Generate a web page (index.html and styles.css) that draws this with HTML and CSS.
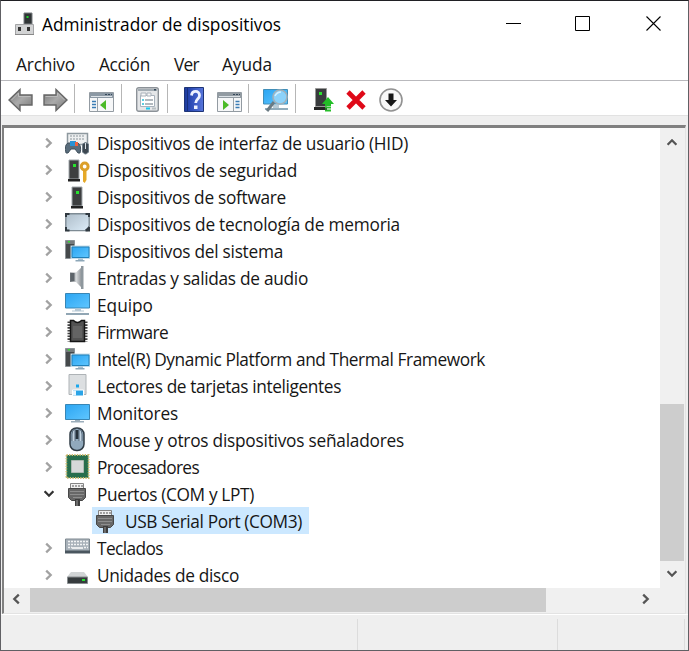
FILE: index.html
```html
<!DOCTYPE html>
<html lang="es">
<head>
<meta charset="utf-8">
<title>Administrador de dispositivos</title>
<link rel="stylesheet" href="styles.css">
</head>
<body>
<svg width="0" height="0" class="defs">
  <defs>
    <linearGradient id="blue" x2="1" y2="1"><stop stop-color="#2ba5f2"/><stop offset="1" stop-color="#5fc6ff"/></linearGradient>
    <linearGradient id="metal" x2="1"><stop stop-color="#6e7378"/><stop offset=".5" stop-color="#d4d7d9"/><stop offset="1" stop-color="#777d83"/></linearGradient>
    <linearGradient id="arrow" x2="1" y2="1"><stop stop-color="#777"/><stop offset=".5" stop-color="#aaa"/><stop offset="1" stop-color="#787878"/></linearGradient>
    <linearGradient id="silver" y2="1" x2="1"><stop stop-color="#aebdc9"/><stop offset="1" stop-color="#dcecf8"/></linearGradient>
    <linearGradient id="help" x2="1"><stop stop-color="#1e3c9c"/><stop offset=".2" stop-color="#2342ad"/><stop offset="1" stop-color="#5876dc"/></linearGradient>
  </defs>
  <symbol id="chev" viewBox="0 0 10 12"><path d="M2.2 1.6 6.7 6 2.2 10.4" fill="none" stroke="currentColor" stroke-width="2.3"/></symbol>
  <symbol id="tower" viewBox="0 0 25 27"><path d="M7 3h10v19H7z" fill="#3d3f40" stroke="#a2a8ac"/><path d="M6 22h12v2.5H6z" fill="#222"/><path d="M11 7h3v3h-3z" fill="#27e32e"/></symbol>
  <symbol id="system" viewBox="0 0 25 27"><path d="M.5 2.500h9v18h-9z" fill="#45494b" stroke="#8d9397"/><path d="M1 3h8v3H1z" fill="#767b7e"/><path d="M3 3h2v1.500H3z" fill="#35db33"/><path d="M6.500 8.500h18v11.500h-18z" fill="url(#blue)" stroke="#c4dcea" stroke-width="2"/><path d="M7 9h17v10.500H7z" fill="url(#blue)" stroke="#2280b8"/><path d="M13 20.500h5v2h-5z" fill="#a9c2d2"/><path d="M10.500 22h9v1.500h-9z" fill="#8da7b8"/></symbol>
  <symbol id="port" viewBox="0 0 25 27"><path d="M5.500 2.500h13v6h-13z" fill="#f0f0f0" stroke="#858585"/><path d="M8 4v2m3-2v2m3-2v2m3-2v2" stroke="#555"/><path d="M3.500 7.500h17v9l-3 3h-11l-3-3z" fill="#686868" stroke="#474747"/><path d="M5 10.500h14M5 13.500h14M8 16.500h9" stroke="#8e8e8e"/><path d="M10 18h5v7h-5z" fill="#3e3e3e"/><path d="M12 19v6" stroke="#999"/></symbol>
</svg>
<div class="window">
  <header class="titlebar">
    <svg class="app" viewBox="0 0 22 26"><path d="M10 2h8v11h-8z" fill="#303536" stroke="#787d80"/><path d="M12.500 5h2v2h-2z" fill="#20d22e"/><path d="M1.500 13.500h18v10h-18z" fill="#d2d3d4" stroke="#a4a5a7"/><path d="M4 16h3v4H4zm9 0h3v4h-3z" fill="#333"/><path d="M1 23.500h19" stroke="#888"/></svg>
    <h1><span class="t" style="width:239px">Administrador de dispositivos</span></h1>
    <div class="controls">
      <svg viewBox="0 0 16 16"><path d="M0 7.500h15" stroke="#000"/></svg>
      <svg viewBox="0 0 16 16"><path d="M.5.500h14v14H.5z" fill="none" stroke="#000"/></svg>
      <svg class="close" viewBox="0 0 16 16"><path d="M.5.500l14 14m0-14-14 14" stroke="#000" stroke-width="1.100"/></svg>
    </div>
  </header>
  <nav class="menu"><span class="t" style="width:59px">Archivo</span><span class="t" style="width:51px">Acción</span><span class="t" style="width:25px">Ver</span><span class="t" style="width:50px">Ayuda</span></nav>
  <div class="toolbar">
    <svg class="back" viewBox="0 0 25 24"><path d="M1 12 12 1.500V7h12v10H12v5.500z" fill="url(#arrow)" stroke="#666" stroke-width="1.400"/><path d="M3.500 12 10.500 5v3.500h12" fill="none" stroke="#bbb"/></svg>
    <svg class="forward" viewBox="0 0 25 24"><path d="M24 12 13 1.500V7H1v10h12v5.500z" fill="url(#arrow)" stroke="#666" stroke-width="1.400"/><path d="M21.500 12 14.500 5v3.500h-12" fill="none" stroke="#bbb"/></svg>
    <i></i>
    <svg class="console" viewBox="0 0 25 20"><path d="M.5.500h24v19H.5z" fill="#f6f7f8" stroke="#939ba2"/><path d="M1 1h23v5H1z" fill="#8b98a4"/><path d="M2 4.500h21" stroke="#dce2e7"/><path d="M16 2.500h2m1 0h2m1 0h1" stroke="#35485a"/><path d="M8.500 6v13" stroke="#9aa2a8"/><path d="M3 9.500h4M3 12.500h4M3 15.500h4" stroke="#397bb4" stroke-width="1.500"/><path d="m17 8-6 5 6 5z" fill="#4aba26"/></svg>
    <i></i>
    <svg class="properties" viewBox="0 0 23 25"><rect x=".7" y=".7" width="21.600" height="23.600" rx="2" fill="#e5e7e9" stroke="#8c9298" stroke-width="1.400"/><path d="M2 3h19" stroke="#a3acb3" stroke-width="2"/><path d="M18 2h2v1.500h-2z" fill="#34485a"/><path d="M4.500 8.500h14v11h-14z" fill="#fff" stroke="#a8b2bc"/><path d="M5 6h5v3H5zm6 0h4v3h-4z" fill="#f8f8f8" stroke="#aab2bb"/><path d="M6 13h2m-2 4h2" stroke="#28bfd6" stroke-width="1.500"/><path d="M9 13h8m-8 4h8" stroke="#99a3aa" stroke-width="1.300"/><path d="M10 20.500h4v2h-4z" fill="#15c8ef"/><path d="M16 20.500h4v2h-4z" fill="#b8bfc3"/></svg>
    <i></i>
    <svg class="help" viewBox="0 0 20 25"><path d="M.5.500h19v24H.5z" fill="url(#help)" stroke="#1e3577"/><path d="M3.500 1v23" stroke="#17307c"/><path d="M7.500 8.500C8 3 15.500 3 15.500 8.500c0 3.500-3.800 3.500-3.800 7.500" fill="none" stroke="#eef2ff" stroke-width="2.800"/><path d="M10 18.500h3.500V22H10z" fill="#eef2ff"/></svg>
    <svg class="console actions" viewBox="0 0 25 20"><path d="M.5.500h24v19H.5z" fill="#f6f7f8" stroke="#939ba2"/><path d="M1 1h23v5H1z" fill="#929ba2"/><path d="M2 4.500h21" stroke="#dce2e7"/><path d="M16 2.500h2m1 0h2m1 0h1" stroke="#35485a"/><path d="M16.500 6v13" stroke="#9aa2a8"/><path d="M18.500 9.500h4M18.500 12.500h4M18.500 15.500h4" stroke="#397bb4" stroke-width="1.500"/><path d="m6 8 6 5-6 5z" fill="#4aba26"/></svg>
    <i></i>
    <svg class="scan" viewBox="0 0 26 24"><path d="M.5 1.500h24V16H.5z" fill="url(#blue)" stroke="#418eb8"/><path d="M10 17h6v3h-6z" fill="#b8cbd6"/><path d="M2 21h23" stroke="#91acbb" stroke-width="2"/><path d="m11 14-7 9" stroke="#6b7b83" stroke-width="3"/><circle cx="17" cy="9" r="7" fill="#8cd2fa" stroke="#a1b1ba" stroke-width="1.600"/><path d="M12 8q2-4 6-4" fill="none" stroke="#d6f0ff" stroke-width="1.500"/></svg>
    <i></i>
    <svg class="update" viewBox="0 0 20 25"><path d="M1.500 1.500h11v18h-11z" fill="#383b3d" stroke="#999"/><path d="M0 20h13v3H0z" fill="#252525"/><path d="M5 5h3v3H5z" fill="#2ae12d"/><path d="m14 10 6 7h-3v2h-6v-2H8z" fill="#22bd27"/><path d="M11 20.500h6m-6 3h6" stroke="#27be2a" stroke-width="1.800"/></svg>
    <svg class="remove" viewBox="0 0 20 20"><path d="m2 2 16 16M18 2 2 18" stroke="#df0918" stroke-width="4.700"/></svg>
    <svg class="disable" viewBox="0 0 24 24"><circle cx="12" cy="12" r="11" fill="#f8f8f8" stroke="#929292" stroke-width="1.600"/><path d="M9.500 5.500h5V12H18l-6 6.500L6 12h3.500z" fill="#161616"/></svg>
  </div>
  <div class="gutter"></div>
  <main class="panel">
    <ul class="tree">
      <li><svg class="c"><use href="#chev"/></svg><svg class="icon" viewBox="0 0 25 27"><path d="M2.500 3.500h20v11h-20z" fill="#eef0f1" stroke="#8e999f" stroke-width="1.500"/><path d="M5 6h15M5 9h15" stroke="#8d969c" stroke-dasharray="2 1"/><path d="M1 23Q-1 15 3 13h10q4 3 2 10h-2l-3-4H6l-3 4z" fill="#596c7b" stroke="#40505c"/><path d="M5 11h6v5H5z" fill="#2a92d5"/><path d="M10 12h3v4h-3z" fill="#eb6241"/><path d="M17.500 14q3-3 6 0v8q-3 4-6 0z" fill="#3d4851" stroke="#6d7c87"/><path d="M20.500 13v6" stroke="#dce3e8"/></svg><span class="t" style="width:311px">Dispositivos de interfaz de usuario (HID)</span></li>
      <li><svg class="c"><use href="#chev"/></svg><svg class="icon" viewBox="0 0 25 27"><use href="#tower" x="-3" width="25" height="27"/><path d="M18 13h3.500v10L19.700 26 18 24.500z" fill="#e6a928"/><circle cx="19.700" cy="9.500" r="3.400" fill="none" stroke="#dca02a" stroke-width="3"/></svg><span class="t" style="width:200px">Dispositivos de seguridad</span></li>
      <li><svg class="c"><use href="#chev"/></svg><svg class="icon"><use href="#tower"/></svg><span class="t" style="width:189px">Dispositivos de software</span></li>
      <li><svg class="c"><use href="#chev"/></svg><svg class="icon" viewBox="0 0 25 27"><rect x=".8" y="2.800" width="23.400" height="16.800" rx="2" fill="url(#silver)" stroke="#7e8b94" stroke-width="1.400"/><path d="M1 6V3h3.500M20.500 3H24v3M1 16v3.500h3.500m16 0H24V16" fill="none" stroke="#303940" stroke-width="2"/><path d="m20 19 4-4v4z" fill="#303940"/></svg><span class="t" style="width:303px">Dispositivos de tecnología de memoria</span></li>
      <li><svg class="c"><use href="#chev"/></svg><svg class="icon"><use href="#system"/></svg><span class="t" style="width:186px">Dispositivos del sistema</span></li>
      <li><svg class="c"><use href="#chev"/></svg><svg class="icon" viewBox="0 0 25 27"><path d="M5 7.500h6L18 1v23l-7-7H5z" fill="url(#metal)"/><path d="M5.500 8h4v8h-4z" fill="#5d646a"/><path d="M16 1h2.500v23H16z" fill="#8e979d"/></svg><span class="t" style="width:211px">Entradas y salidas de audio</span></li>
      <li><svg class="c"><use href="#chev"/></svg><svg class="icon" viewBox="0 0 25 27"><path d="M.5 1.500h24v14.500H.5z" fill="url(#blue)" stroke="#3886b5"/><path d="M10 16.500h6v2h-6zM7 18.500h12v1H7z" fill="#b5c7d3"/><path d="M1 22h23" stroke="#91a6b4" stroke-width="2"/></svg><span class="t" style="width:56px">Equipo</span></li>
      <li><svg class="c"><use href="#chev"/></svg><svg class="icon" viewBox="0 0 25 27"><path d="M4 2.500v20m17-20v20" stroke="#444" stroke-width="3" stroke-dasharray="1.600 1.200"/><path d="M5.500 1.500h3q4 4 8 0h3v21h-14z" fill="#535353" stroke="#151515" stroke-width="1.500"/><path d="M8 7h9v12H8z" fill="#646464"/></svg><span class="t" style="width:71px">Firmware</span></li>
      <li><svg class="c"><use href="#chev"/></svg><svg class="icon"><use href="#system"/></svg><span class="t" style="width:388px">Intel(R) Dynamic Platform and Thermal Framework</span></li>
      <li><svg class="c"><use href="#chev"/></svg><svg class="icon" viewBox="0 0 25 27"><path d="M4 1.500h17v20H4z" fill="#dcdfe1" stroke="#aeb3b6"/><path d="M11 11.500h3v3h-3z" fill="#1ba7ec"/><path d="M7.500 17h11v6h-11z" fill="#2aa4e7" stroke="#fff"/><path d="M8 17.500h3v5H8z" fill="#e9f6ff"/></svg><span class="t" style="width:244px">Lectores de tarjetas inteligentes</span></li>
      <li><svg class="c"><use href="#chev"/></svg><svg class="icon" viewBox="0 0 25 27"><path d="M.5 4.500h24v15H.5z" fill="url(#blue)" stroke="#3886b5"/><path d="M10 20h5v1.500h-5zM6 21h13v1.500H6z" fill="#9caebb"/></svg><span class="t" style="width:81px">Monitores</span></li>
      <li><svg class="c"><use href="#chev"/></svg><svg class="icon" viewBox="0 0 25 27"><rect x="5" y="1" width="14" height="22.500" rx="6.500" fill="#91a9bc" stroke="#303c46" stroke-width="1.500"/><path d="M7 14V7q0-4 3-5v12m4 0V2q3 1 3 5v7" fill="#c3d4e1" stroke="#56697a"/><path d="M12 3v9" stroke="#27323b" stroke-width="2.800"/></svg><span class="t" style="width:307px">Mouse y otros dispositivos señaladores</span></li>
      <li><svg class="c"><use href="#chev"/></svg><svg class="icon" viewBox="0 0 25 27"><path d="M1.500 1h22v23h-22z" fill="#25774e" stroke="#ceb76f" stroke-width="2" stroke-dasharray="1.300 1.300"/><path d="M2.500 2h20v21h-20z" fill="#286e4d"/><path d="M6.500 6.500h12v12h-12z" fill="#d5d8d8" stroke="#adbab2"/></svg><span class="t" style="width:102px">Procesadores</span></li>
      <li><svg class="c open"><use href="#chev"/></svg><svg class="icon"><use href="#port"/></svg><span class="t" style="width:157px">Puertos (COM y LPT)</span></li>
      <li class="child"><div><svg class="icon"><use href="#port"/></svg><span class="t" style="width:177px">USB Serial Port (COM3)</span></div></li>
      <li><svg class="c"><use href="#chev"/></svg><svg class="icon" viewBox="0 0 25 27"><path d="M.5 4h24v13.500H.5z" fill="#a8b1b9" stroke="#7e8991"/><path d="M3 6.500h20M3 9.500h20M3 12.500h4m12 0h4" stroke="#f2f4f5" stroke-width="1.700" stroke-dasharray="2 1"/><path d="M7 13h11" stroke="#fff" stroke-width="1.500"/><path d="M0 15.500h25v3H0z" fill="#4a565f"/></svg><span class="t" style="width:66px">Teclados</span></li>
      <li><svg class="c"><use href="#chev"/></svg><svg class="icon" viewBox="0 0 25 27"><path d="M6 10h13l4 5H2z" fill="#d1d4d5"/><path d="M2.500 15h20v6.500h-20z" fill="#363b3d" stroke="#898e90"/><path d="M17 17h3v2h-3z" fill="#26e331"/></svg><span class="t" style="width:142px">Unidades de disco</span></li>
    </ul>
    <div class="vscroll"><svg class="s up"><use href="#chev"/></svg><b></b><svg class="s down"><use href="#chev"/></svg></div>
    <div class="hscroll"><svg class="s left"><use href="#chev"/></svg><b></b><svg class="s right"><use href="#chev"/></svg></div>
  </main>
  <footer class="status"><span></span><span></span><span></span></footer>
</div>
<script src="fit.js"></script>
</body>
</html>
```
FILE: styles.css
```css
* { box-sizing: border-box; }
body { margin: 0; overflow: hidden; font: 17.3px/27px "Open Sans", "Noto Sans", sans-serif; color: #161616; }
.defs { position: absolute; }
svg { display: block; flex: none; }
.window { display: flex; flex-direction: column; width: 689px; height: 651px; border: 1px solid #606064; border-top-color: #202024; background: #efefef; }
.titlebar, .menu, .toolbar, .panel { background: #fff; }
.titlebar { height: 46px; flex: none; display: flex; align-items: center; padding-left: 13px; }
.app { width: 22px; height: 26px; margin-right: 6px; }
h1 { font: inherit; margin: 0; color: #000; }
.t { display: block; white-space: nowrap; }
.controls { display: flex; gap: 53px; margin-left: auto; margin-right: 26px; }
.controls svg { width: 16px; height: 16px; }
.controls .close { margin-left: 2px; }
.menu { height: 33px; flex: none; display: flex; gap: 24px; padding: 4px 0 0 15px; }
.menu .t:last-child { margin-left: -1px; }
.toolbar { height: 36px; flex: none; display: flex; align-items: center; border-top: 1px solid #b9b9bd; border-bottom: 1px solid #e2e2e2; padding: 0 0 0 7px; }
.toolbar i { width: 1px; height: 29px; background: #b6b6b6; }
.back, .forward { width: 25px; height: 24px; }
.back, .forward, .properties, .help, .update, .scan, .remove, .disable { margin-top: 3px; }
.forward { margin: 3px 6px 0 10px; }
.console { width: 25px; height: 20px; margin: 7px 7px 0 14px; }
.properties { width: 23px; height: 25px; margin: 3px 8px 0 14px; }
.help { width: 20px; height: 25px; margin-left: 16px; }
.actions { margin-left: 13px; margin-right: 6px; }
.scan { width: 26px; height: 24px; margin: 3px 6px 0 14px; }
.update { width: 20px; height: 25px; margin-left: 18px; }
.remove { width: 20px; height: 20px; margin-left: 12px; }
.disable { width: 24px; height: 24px; margin-left: 13px; }
.gutter { height: 9px; flex: none; }
.panel { height: 489px; flex: none; margin: 0 2px 0 1px; display: grid; grid-template: 460px 25px / 1fr 25px; border: solid #808080; border-width: 3px 1px 1px 2px; border-right-color: #e3e3e3; border-bottom-color: #e3e3e3; }
.tree { list-style: none; margin: 0; padding: 1px 0 0 40px; overflow: hidden; }
.tree li { height: 27px; display: flex; align-items: center; }
.tree .icon, .tree .t { transform: translateY(1px); }
.c { width: 10px; height: 12px; color: #a2a2a2; margin-right: 11px; }
.open { transform: rotate(90deg); color: #333; }
.icon { width: 25px; height: 27px; margin-right: 7px; }
.child { padding-left: 48px; }
.child div { height: 27px; display: flex; width: 217px; background: #cce8ff; }
.child .icon { margin: 0 7px 0 1px; }
.vscroll, .hscroll { background: #f0f0f0; display: flex; }
.vscroll { flex-direction: column; align-items: flex-start; }
.vscroll b { height: 157px; width: 24px; background: #cdcdcd; margin-top: 256px; }
.s { width: 10px; height: 12px; color: #555; }
.up { transform: rotate(-90deg); margin: 8px 0 0 7px; }
.down { transform: rotate(90deg); margin: 7px 0 0 7px; }
.hscroll { grid-column: 1 / 3; align-items: flex-start; }
.hscroll b { width: 516px; height: 24px; background: #cdcdcd; }
.hscroll .s { margin-top: 5px; }
.left { transform: rotate(180deg); margin: 0 9px 0 7px; }
.right { margin-left: 95px; }
.status { flex: 1; display: grid; grid-template-columns: 357px 200px 127px; background: #efefef; border-top: 1px solid #fff; padding-top: 4px; }
.status span { border-right: 1px solid #dcdcdc; }
```
FILE: fit.js
```js
// Spread each label's letters so that it fills its column width.
document.querySelectorAll('.t').forEach((label) => {
  const range = document.createRange();
  range.selectNodeContents(label);
  const spacing = (parseFloat(label.style.width) - range.getBoundingClientRect().width) / label.textContent.length;
  label.style.letterSpacing = spacing + 'px';
});
```
